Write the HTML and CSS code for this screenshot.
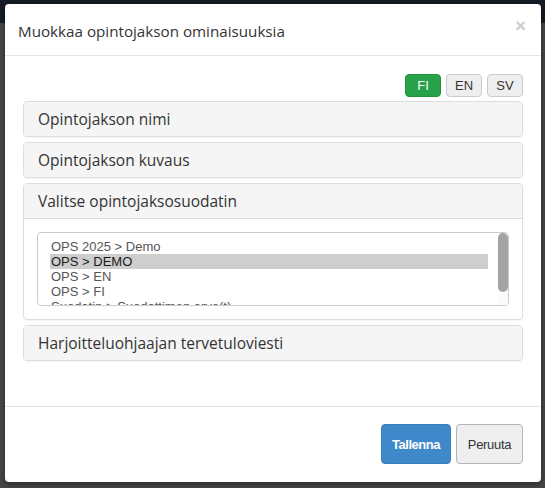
FILE: index.html
```html
<!DOCTYPE html>
<html lang="fi">
<head>
<meta charset="utf-8">
<title>Muokkaa opintojakson ominaisuuksia</title>
<link rel="stylesheet" href="styles.css">
</head>
<body>
<div class="modal">
  <div class="modal-header">
    <h4 class="modal-title">Muokkaa opintojakson ominaisuuksia</h4>
    <button class="close" type="button">×</button>
  </div>
  <div class="modal-body">
    <div class="lang-row">
      <button class="lang-btn active" type="button">FI</button>
      <button class="lang-btn" type="button">EN</button>
      <button class="lang-btn" type="button">SV</button>
    </div>
    <div class="panel-group">
      <div class="panel"><div class="panel-heading">Opintojakson nimi</div></div>
      <div class="panel"><div class="panel-heading">Opintojakson kuvaus</div></div>
      <div class="panel">
        <div class="panel-heading open">Valitse opintojaksosuodatin</div>
        <div class="panel-body">
          <div class="listbox">
            <div class="options">
              <div class="option">OPS 2025 &gt; Demo</div>
              <div class="option selected">OPS &gt; DEMO</div>
              <div class="option">OPS &gt; EN</div>
              <div class="option">OPS &gt; FI</div>
              <div class="option">Suodatin &gt; Suodattimen arvo(t)</div>
            </div>
            <div class="scrollbar"><div class="thumb"></div></div>
          </div>
        </div>
      </div>
      <div class="panel"><div class="panel-heading">Harjoitteluohjaajan tervetuloviesti</div></div>
    </div>
  </div>
  <div class="modal-footer">
    <button class="btn btn-primary" type="button">Tallenna</button>
    <button class="btn btn-default" type="button">Peruuta</button>
  </div>
</div>
</body>
</html>
```
FILE: styles.css
```css
html, body {
  margin: 0;
  height: 100%;
}
body {
  background: linear-gradient(#151c25 0, #151c25 23px, #474747 23px, #474747 100%);
  font-family: "Open Sans", "Noto Sans", sans-serif;
  color: #333;
  overflow: hidden;
}
.modal {
  margin: 4px 0 0 5px;
  width: 536px;
  height: 478px;
  background: #fff;
  border-radius: 4px;
  box-shadow: 0 2px 6px rgba(0, 0, 0, 0.45);
  display: flex;
  flex-direction: column;
}
.modal-header {
  display: flex;
  align-items: flex-start;
  padding: 17px 15px 13px 13px;
  border-bottom: 1px solid #e5e5e5;
}
.modal-title {
  margin: 0;
  font-size: 15.2px;
  line-height: 21px;
  font-weight: 400;
  color: #333;
}
.close {
  margin-left: auto;
  margin-top: -5px;
  padding: 0;
  border: 0;
  background: none;
  font-family: "Liberation Sans", Arial, sans-serif;
  font-size: 19px;
  line-height: 19px;
  font-weight: 700;
  color: #cfcfcf;
}
.modal-body {
  padding: 18px 18px 45px 18px;
}
.lang-row {
  display: flex;
  justify-content: flex-end;
  gap: 5px;
  margin-bottom: 4px;
}
.lang-btn {
  width: 36px;
  height: 23px;
  padding: 0;
  border: 1px solid #cccccc;
  border-radius: 4px;
  background: #eeeeee;
  color: #333;
  font-family: "Liberation Sans", Arial, sans-serif;
  font-size: 13px;
}
.lang-btn.active {
  background: #28a24a;
  border-color: #23923f;
  color: #fff;
}
.panel-group {
  display: flex;
  flex-direction: column;
  gap: 5px;
}
.panel {
  border: 1px solid #dddddd;
  border-radius: 4px;
  background: #fff;
  box-shadow: 0 1px 1px rgba(0, 0, 0, 0.04);
}
.panel-heading {
  height: 34px;
  padding: 0 14px;
  display: flex;
  align-items: center;
  background: #f5f5f5;
  border-radius: 3px;
  font-size: 15.5px;
  color: #333;
}
.panel-heading.open {
  border-bottom: 1px solid #dddddd;
  border-radius: 3px 3px 0 0;
}
.panel-body {
  padding: 13px;
}
.listbox {
  position: relative;
  height: 72px;
  border: 1px solid #cccccc;
  border-radius: 4px;
  overflow: hidden;
}
.options {
  padding: 6px 20px 6px 12px;
  font-family: "Liberation Sans", Arial, sans-serif;
  font-size: 13px;
  color: #555;
}
.option {
  line-height: 15px;
  padding: 0 1px;
  white-space: nowrap;
}
.option.selected {
  background: #cecece;
  color: #1a1a1a;
}
.scrollbar {
  position: absolute;
  top: 0;
  right: 0;
  width: 10px;
  height: 72px;
  background: #fafafa;
}
.thumb {
  height: 59px;
  border-radius: 5px;
  background: #a3a3a3;
}
.modal-footer {
  margin-top: auto;
  border-top: 1px solid #e5e5e5;
  padding: 17px 18px 18px;
  display: flex;
  justify-content: flex-end;
  gap: 5px;
}
.btn {
  height: 40px;
  border-radius: 4px;
  font-family: "Liberation Sans", Arial, sans-serif;
  font-size: 13px;
  letter-spacing: -0.3px;
  padding: 0;
}
.btn-primary {
  width: 70px;
  background: #3f88c9;
  border: 1px solid #3a7ebd;
  color: #fff;
  font-weight: 700;
  letter-spacing: -0.5px;
}
.btn-default {
  width: 67px;
  background: #efefef;
  border: 1px solid #b5b5b5;
  color: #333;
}
```
